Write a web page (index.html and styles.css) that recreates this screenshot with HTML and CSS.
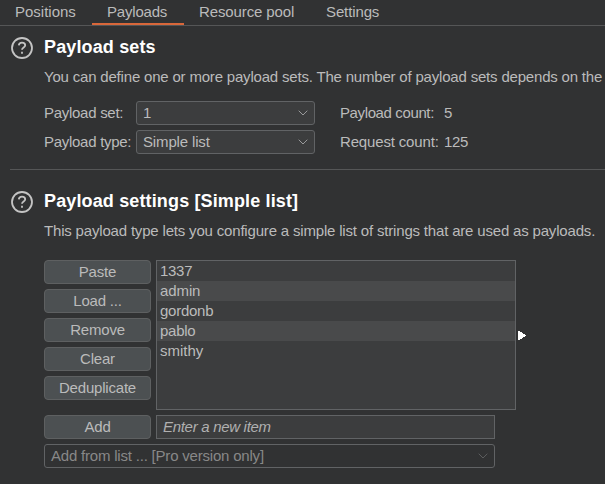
FILE: index.html
```html
<!DOCTYPE html>
<html lang="en">
<head>
<meta charset="utf-8">
<title>Payloads</title>
<link rel="stylesheet" href="styles.css">
</head>
<body>
<nav class="tabs">
  <span class="tab">Positions</span>
  <span class="tab active">Payloads</span>
  <span class="tab">Resource pool</span>
  <span class="tab">Settings</span>
</nav>
<main>
  <section class="section sets">
    <svg class="help" viewBox="0 0 22 22"><circle cx="11" cy="11" r="10"/><path d="M7.8 8.4C8 6.6 9.3 5.6 11 5.6s3.2 1 3.2 2.7c0 2.1-3.2 2.3-3.2 4.5M11 14.8v2"/></svg>
    <div class="content">
      <h2>Payload sets</h2>
      <p>You can define one or more payload sets. The number of payload sets depends on the</p>
      <div class="fields">
        <span class="label">Payload set:</span>
        <div class="select">1<svg class="chevron" viewBox="0 0 10 6"><path d="M.7.7 5 5 9.3.7"/></svg></div>
        <span class="count tight">Payload count:</span><span class="value">5</span>
        <span class="label">Payload type:</span>
        <div class="select">Simple list<svg class="chevron" viewBox="0 0 10 6"><path d="M.7.7 5 5 9.3.7"/></svg></div>
        <span class="count">Request count:</span><span class="value">125</span>
      </div>
    </div>
  </section>
  <section class="section settings">
    <svg class="help" viewBox="0 0 22 22"><circle cx="11" cy="11" r="10"/><path d="M7.8 8.4C8 6.6 9.3 5.6 11 5.6s3.2 1 3.2 2.7c0 2.1-3.2 2.3-3.2 4.5M11 14.8v2"/></svg>
    <div class="content">
      <h2>Payload settings [Simple list]</h2>
      <p class="wide">This payload type lets you configure a simple list of strings that are used as payloads.</p>
      <div class="editor">
        <div class="buttons">
          <button>Paste</button>
          <button>Load ...</button>
          <button>Remove</button>
          <button>Clear</button>
          <button>Deduplicate</button>
        </div>
        <div class="list-wrap">
          <ul class="list"><li>1337</li><li>admin</li><li>gordonb</li><li>pablo</li><li>smithy</li></ul>
          <svg class="marker" viewBox="0 0 8 9" shape-rendering="crispEdges"><path d="M0 0h2v1h2v1h1v1h2v1h1v1H7v1H5v1H4v1H2v1H0z"/></svg>
        </div>
      </div>
      <div class="add-row">
        <button>Add</button>
        <div class="input">Enter a new item</div>
      </div>
      <div class="select disabled">Add from list ... [Pro version only]<svg class="chevron" viewBox="0 0 10 6"><path d="M.7.7 5 5 9.3.7"/></svg></div>
    </div>
  </section>
</main>
</body>
</html>
```
FILE: styles.css
```css
* { box-sizing: border-box; }
body {
  margin: 0;
  height: 484px;
  overflow: hidden;
  background: #313233;
  color: #bbb;
  font: 15px/20px "Liberation Sans", Arial, sans-serif;
  white-space: nowrap;
}
.tabs {
  display: flex;
  height: 26px;
  border-bottom: 1px solid #555657;
}
.tab {
  height: 25px;
  padding: 2px 15px 0;
}
.tab.active {
  width: 92px;
  border-bottom: 2px solid #d9673a;
  letter-spacing: -0.2px;
}
.tab:first-child { width: 92px; }
.tab:nth-child(3) {
  width: 127px;
  letter-spacing: -0.12px;
}
.tab:last-child { letter-spacing: -0.12px; }
main { padding-left: 10px; }
.section {
  display: flex;
  gap: 11px;
  padding: 11px 0 0 1px;
}
.sets { height: 143px; }
.settings {
  padding-top: 21px;
  border-top: 1px solid #555657;
}
.help {
  flex: none;
  width: 22px;
  height: 22px;
  fill: none;
  stroke: #c4c4c4;
  stroke-width: 1.8;
}
h2 {
  margin: -2px 0 0;
  color: #fff;
  font-size: 18px;
  line-height: 24px;
  letter-spacing: 0.14px;
}
p {
  margin: 8px 0 0;
  letter-spacing: -0.19px;
}
p.wide { letter-spacing: -0.18px; }
.fields {
  display: grid;
  grid-template-columns: 92px 179px 129px auto;
  grid-auto-rows: 24px;
  row-gap: 5px;
  align-items: center;
  margin-top: 14px;
}
.label { letter-spacing: -0.28px; }
.count {
  padding-left: 25px;
  letter-spacing: -0.16px;
}
.count.tight { letter-spacing: -0.38px; }
.value { letter-spacing: -0.3px; }
.select {
  display: flex;
  align-items: center;
  justify-content: space-between;
  height: 24px;
  padding: 0 6px;
  border: 1px solid #616365;
  border-radius: 3px;
  background: #3c3d3e;
  letter-spacing: -0.15px;
}
.chevron {
  width: 10px;
  height: 6px;
  fill: none;
  stroke: #9a9b9c;
}
.editor {
  display: flex;
  gap: 5px;
  margin-top: 19px;
}
.buttons {
  display: flex;
  flex-direction: column;
  gap: 5px;
}
button {
  width: 107px;
  height: 24px;
  padding: 0;
  border: 1px solid #5e6061;
  border-radius: 4px;
  background: #4c5052;
  color: #bbb;
  font: inherit;
  letter-spacing: -0.2px;
}
.list-wrap { position: relative; }
.list {
  width: 360px;
  height: 150px;
  margin: 0;
  padding: 0;
  border: 1px solid #616365;
  background: #3c3d3e;
  list-style: none;
}
.list li {
  height: 20px;
  padding-left: 3px;
  letter-spacing: -0.25px;
}
.list li:first-child { letter-spacing: -0.3px; }
.list li:nth-child(2) { letter-spacing: -0.1px; }
.list li:last-child { letter-spacing: 0; }
.list li:nth-child(even) { background: #494a4b; }
.marker {
  position: absolute;
  top: 71px;
  left: 362px;
  width: 8px;
  height: 9px;
  fill: #fff;
}
.add-row {
  display: flex;
  gap: 5px;
  margin: 5px 0;
}
.input {
  width: 339px;
  height: 24px;
  padding: 1px 6px;
  border: 1px solid #616365;
  background: #3c3d3e;
  color: #b0b0b0;
  font-style: italic;
  letter-spacing: -0.3px;
}
.disabled {
  width: 451px;
  background: #313233;
  color: #888;
  letter-spacing: -0.2px;
}
.disabled .chevron { stroke: #5c5d5e; }
```
